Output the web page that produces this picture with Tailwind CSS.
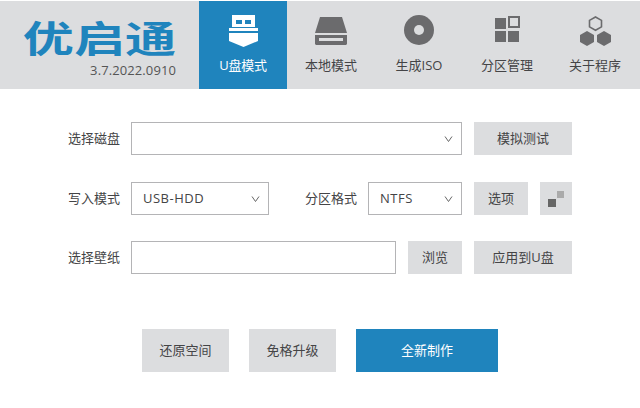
<!DOCTYPE html>
<html lang="zh-CN">
<head>
<meta charset="utf-8">
<script src="https://cdn.jsdelivr.net/npm/@tailwindcss/browser@4"></script>
</head>
<body class="w-[640px] h-[408px] overflow-hidden bg-white font-['Open_Sans','Noto_Sans_CJK_SC',sans-serif] text-[#444446]">
<header class="mt-px h-[88px] flex bg-[#dcdddf]">
  <div class="w-[199px] flex flex-col items-end pr-[23px]">
    <div class="mt-[17px] h-[38px] leading-[38px] text-[37px] font-bold text-[#1f84bd] font-['Noto_Sans_CJK_SC',sans-serif] whitespace-nowrap origin-right scale-x-[1.38]">优启通</div>
    <div class="text-[13px] leading-[16px] mt-[6px] text-[#555] tracking-[0.1px]">3.7.2022.0910</div>
  </div>
  <nav class="flex text-[13px]">
    <div class="w-[88px] bg-[#1f84bd] text-white flex flex-col items-center">
      <div class="h-[46px] mt-[14px] flex items-start"><svg width="29" height="32" viewBox="0 0 29 32"><path fill="#fff" d="M3 0h23v12H3z"/><path fill="#1f84bd" d="M7 5h6v4H7zM16 5h6v4h-6z"/><path fill="#fff" d="M0 13h29v3H0zM0 18h29v8l-14.500 6L0 26z"/></svg></div>
      <span class="-mt-[5px] leading-[18px] tracking-[-0.3px]">U盘模式</span>
    </div>
    <div class="w-[88px] flex flex-col items-center">
      <div class="h-[46px] mt-[14px] flex items-start"><svg width="32" height="31" viewBox="0 0 32 31"><path fill="#6b6b6d" d="M5 2h22l5 16H0z"/><path fill="#6b6b6d" d="M0 20h32v9l-1 1H1l-1-1z"/><path fill="#dcdddf" d="M4 23h24v3H4z"/></svg></div>
      <span class="-mt-[5px] leading-[18px]">本地模式</span>
    </div>
    <div class="w-[88px] flex flex-col items-center">
      <div class="h-[46px] mt-[14px] flex items-start"><svg width="30" height="30" viewBox="0 0 30 30"><circle cx="15" cy="15" r="15" fill="#6b6b6d"/><circle cx="15" cy="15" r="5" fill="#dcdddf"/></svg></div>
      <span class="-mt-[5px] leading-[18px]">生成ISO</span>
    </div>
    <div class="w-[88px] flex flex-col items-center">
      <div class="h-[46px] mt-[15px] flex items-start"><svg width="26" height="26" viewBox="0 0 26 26"><path fill="#6b6b6d" d="M1 2h11v11H1zM1 15h11v11H1zM14 15h11v11H14z"/><path fill="none" stroke="#6b6b6d" stroke-width="2" d="M15 1h10v10H15z"/></svg></div>
      <span class="-mt-[6px] leading-[18px]">分区管理</span>
    </div>
    <div class="w-[88px] flex flex-col items-center">
      <div class="h-[46px] mt-[15px] flex items-start"><svg width="33" height="30" viewBox="0 0 33 30"><path fill="none" stroke="#6b6b6d" stroke-width="1.6" d="M16.500 1l6 3.400v6.500l-6 3.400-6-3.400V4.400z"/><path fill="#6b6b6d" d="M8 15l7 4v7l-7 4-7-4v-7zM25 15l7 4v7l-7 4-7-4v-7z"/></svg></div>
      <span class="-mt-[6px] leading-[18px]">关于程序</span>
    </div>
  </nav>
</header>

<main class="text-[13px] flex flex-col">
  <div class="mt-[33px] h-[33px] flex items-center">
    <label class="w-[120px] text-right">选择磁盘</label>
    <div class="ml-[11px] w-[331px] h-[33px] border border-[#b4b4b6] flex items-center justify-end pr-[8px]">
      <svg width="9" height="6" viewBox="0 0 9 6"><path fill="none" stroke="#666" d="M1 .5l3.500 5 3.500-5"/></svg>
    </div>
    <button class="ml-[12px] w-[98px] h-[33px] bg-[#dcdddf]">模拟测试</button>
  </div>

  <div class="mt-[27px] h-[33px] flex items-center">
    <label class="w-[120px] text-right">写入模式</label>
    <div class="ml-[11px] w-[138px] h-[33px] border border-[#b4b4b6] flex items-center justify-between pl-[11px] pr-[8px] tracking-[0.5px]">
      <span>USB-HDD</span>
      <svg width="9" height="6" viewBox="0 0 9 6"><path fill="none" stroke="#666" d="M1 .5l3.500 5 3.500-5"/></svg>
    </div>
    <label class="ml-[36px] w-[52px] whitespace-nowrap">分区格式</label>
    <div class="ml-[11px] w-[94px] h-[33px] border border-[#b4b4b6] flex items-center justify-between pl-[11px] pr-[8px] tracking-[0.5px]">
      <span>NTFS</span>
      <svg width="9" height="6" viewBox="0 0 9 6"><path fill="none" stroke="#666" d="M1 .5l3.500 5 3.500-5"/></svg>
    </div>
    <button class="ml-[12px] w-[54px] h-[33px] bg-[#dcdddf]">选项</button>
    <button class="ml-[12px] w-[32px] h-[33px] bg-[#dcdddf] flex items-center justify-center">
      <svg width="16" height="16" viewBox="0 0 16 16"><path fill="#aaa" d="M9 0h7v7H9z"/><path fill="#666" d="M0 8h8v8H0z"/></svg>
    </button>
  </div>

  <div class="mt-[26px] h-[33px] flex items-center">
    <label class="w-[120px] text-right">选择壁纸</label>
    <div class="ml-[11px] w-[265px] h-[33px] border border-[#b4b4b6]"></div>
    <button class="ml-[12px] w-[54px] h-[33px] bg-[#dcdddf]">浏览</button>
    <button class="ml-[12px] w-[98px] h-[33px] bg-[#dcdddf]">应用到U盘</button>
  </div>

  <div class="mt-[55px] ml-[142px] flex gap-[20px]">
    <button class="w-[87px] h-[43px] bg-[#dcdddf]">还原空间</button>
    <button class="w-[87px] h-[43px] bg-[#dcdddf]">免格升级</button>
    <button class="w-[142px] h-[43px] bg-[#1f84bd] text-white">全新制作</button>
  </div>
</main>
</body>
</html>
